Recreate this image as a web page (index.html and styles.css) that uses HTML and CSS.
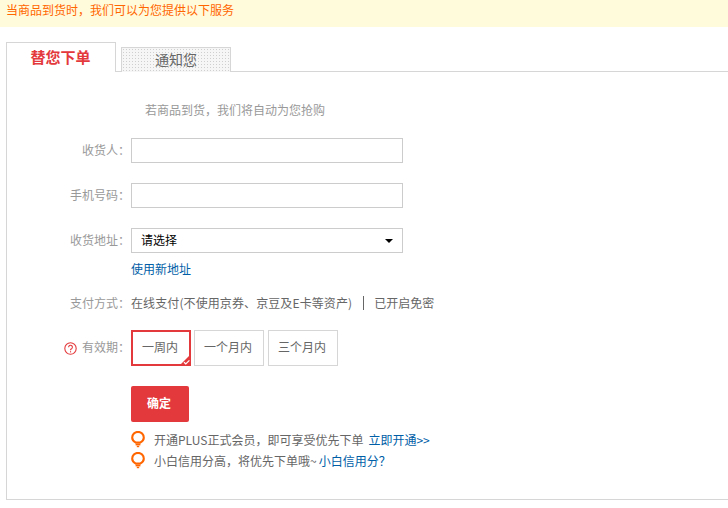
FILE: index.html
```html
<!DOCTYPE html>
<html lang="zh">
<head>
<meta charset="utf-8">
<title>到货服务</title>
<link rel="stylesheet" href="styles.css">
</head>
<body>
<div class="notice">当商品到货时，我们可以为您提供以下服务</div>
<div class="panel">
  <div class="tabs">
    <div class="tab active">替您下单</div>
    <div class="tab idle">通知您</div>
  </div>
  <div class="content">
    <p class="intro">若商品到货，我们将自动为您抢购</p>
    <div class="row first">
      <span class="label">收货人：</span>
      <div class="field"></div>
    </div>
    <div class="row second">
      <span class="label">手机号码：</span>
      <div class="field"></div>
    </div>
    <div class="row second">
      <span class="label">收货地址：</span>
      <div class="field select"><span>请选择</span><i class="caret"></i></div>
    </div>
    <a class="newaddr">使用新地址</a>
    <div class="row pay">
      <span class="label">支付方式：</span>
      <span class="paytext wideparen">在线支付(不使用京券、京豆及E卡等资产)</span>
      <i class="sep"></i>
      <span class="paytext">已开启免密</span>
    </div>
    <div class="row valid">
      <span class="label">
        <svg class="help" width="13" height="13" viewBox="0 0 13 13"><circle cx="6.5" cy="6.5" r="5.7" fill="none" stroke="#e4393c" stroke-width="1.1"/><path d="M4.6 5.2a1.9 1.9 0 1 1 2.9 1.6c-.7.4-1 .7-1 1.5" fill="none" stroke="#e4393c" stroke-width="1.1"/><rect x="6" y="9.2" width="1.1" height="1.2" fill="#e4393c"/></svg>
        <span>有效期：</span>
      </span>
      <div class="options">
        <div class="opt selected">一周内
          <svg class="tick" width="12" height="12" viewBox="0 0 12 12"><path d="M12 0V12H0Z" fill="#e4393c"/><path d="M5 8.2l1.8 1.7L10.4 6.4" fill="none" stroke="#fff" stroke-width="1.3"/></svg>
        </div>
        <div class="opt wide">一个月内</div>
        <div class="opt wide">三个月内</div>
      </div>
    </div>
    <button class="confirm">确定</button>
    <ul class="tips">
      <li>
        <svg class="bulb" width="14" height="17" viewBox="0 0 14 17"><path d="M4.8 11.6C3 10.6 1.2 9.2 1.2 6.7a5.8 5.8 0 0 1 11.6 0c0 2.5-1.8 3.900-3.600 4.900Z" fill="none" stroke="#f60" stroke-width="2.100"/><rect x="4.600" y="12.800" width="4.800" height="1.600" fill="#f60"/><rect x="5.800" y="14.800" width="2.400" height="1.400" fill="#f60"/></svg>
        <span>开通PLUS正式会员，即可享受优先下单</span><a class="blue gap">立即开通</a><span class="arrows">&gt;&gt;</span>
      </li>
      <li>
        <svg class="bulb" width="14" height="17" viewBox="0 0 14 17"><path d="M4.8 11.6C3 10.6 1.2 9.2 1.2 6.7a5.8 5.8 0 0 1 11.6 0c0 2.5-1.8 3.900-3.600 4.900Z" fill="none" stroke="#f60" stroke-width="2.100"/><rect x="4.600" y="12.800" width="4.800" height="1.600" fill="#f60"/><rect x="5.800" y="14.800" width="2.400" height="1.400" fill="#f60"/></svg>
        <span>小白信用分高，将优先下单哦~</span><a class="blue gap2">小白信用分？</a>
      </li>
    </ul>
  </div>
</div>
</body>
</html>
```
FILE: styles.css
```css
* { box-sizing: border-box; }
html, body { margin: 0; padding: 0; }
body {
  width: 728px;
  height: 508px;
  overflow: hidden;
  background: #fff;
  font: 12px/16px "Noto Sans CJK SC", "Liberation Sans", sans-serif;
  color: #666;
}
.notice {
  height: 27px;
  padding: 1px 0 0 6px;
  background: #fffbdb;
  color: #f60;
  line-height: 18px;
}
.panel { margin: 15px 0 0 6px; }
.tabs {
  display: flex;
  align-items: flex-end;
  gap: 5px;
  height: 30px;
  position: relative;
  z-index: 1;
}
.tab { text-align: center; width: 110px; }
.active {
  height: 30px;
  border: 1px solid #d6d6d6;
  border-bottom: 0;
  background: #fff;
  color: #e4393c;
  font-size: 15px;
  font-weight: 700;
  line-height: 27px;
  padding-right: 1px;
}
.idle {
  height: 25px;
  border: 1px solid #d6d6d6;
  border-bottom: 0;
  font-size: 14px;
  line-height: 23px;
  color: #666;
  background-color: #f6f6f6;
  background-image: radial-gradient(#cfcfcf 0.6px, transparent 0.8px);
  background-size: 3px 3px;
}
.content {
  height: 429px;
  margin-top: -1px;
  border: 1px solid #d6d6d6;
  border-right: 0;
  padding-top: 29px;
}
.intro {
  margin: 0 0 0 138px;
  color: #999;
  line-height: 18px;
}
.row { display: flex; align-items: center; }
.first { margin-top: 19px; }
.second { margin-top: 20px; }
.label {
  flex: none;
  width: 124px;
  padding: 0 1px 2px 0;
  text-align: right;
  color: #999;
}
.field {
  width: 272px;
  height: 25px;
  border: 1px solid #ccc;
  background: #fff;
}
.select {
  display: flex;
  align-items: center;
  justify-content: space-between;
  padding: 0 9px 2px;
  color: #000;
}
.caret {
  width: 0;
  height: 0;
  margin-top: 2px;
  border: 4px solid transparent;
  border-top: 4px solid #000;
  border-bottom: 0;
}
.newaddr {
  display: block;
  margin: 8px 0 0 124px;
  color: #005ea7;
  line-height: 16px;
}
.pay { margin-top: 18px; height: 16px; }
.pay .label { padding-bottom: 0; }
.paytext { color: #666; }
.wideparen { letter-spacing: 0.1px; }
.sep {
  width: 1px;
  height: 14px;
  margin: 0 10px 0 11px;
  background: #666;
}
.valid { margin-top: 19px; }
.valid .label {
  display: flex;
  align-items: center;
  justify-content: flex-end;
  gap: 5px;
}
.help { flex: none; margin-top: 2px; }
.options { display: flex; gap: 3px; }
.opt {
  position: relative;
  height: 36px;
  width: 70px;
  padding-right: 2px;
  border: 1px solid #d6d6d6;
  text-align: center;
  line-height: 32px;
  color: #666;
}
.opt.wide + .opt.wide { margin-left: 1px; }
.selected {
  width: 60px;
  border: 2px solid #e4393c;
  line-height: 30px;
}
.tick { position: absolute; right: -2px; bottom: -2px; }
.confirm {
  display: block;
  width: 58px;
  height: 36px;
  margin: 20px 0 0 124px;
  padding: 0 2px 2px 0;
  border: 0;
  border-radius: 2px;
  background: #e4393c;
  color: #fff;
  font: 700 12px/34px "Noto Sans CJK SC", sans-serif;
}
.tips { list-style: none; margin: 7px 0 0 124px; padding: 0; }
.tips li {
  display: flex;
  align-items: center;
  height: 21px;
}
.bulb { flex: none; margin-right: 9px; margin-bottom: 1px; }
.blue { color: #005ea7; }
.gap { margin-left: 5px; }
.gap2 { margin-left: 2px; }
.arrows { color: #005ea7; font-size: 12px; }
```
